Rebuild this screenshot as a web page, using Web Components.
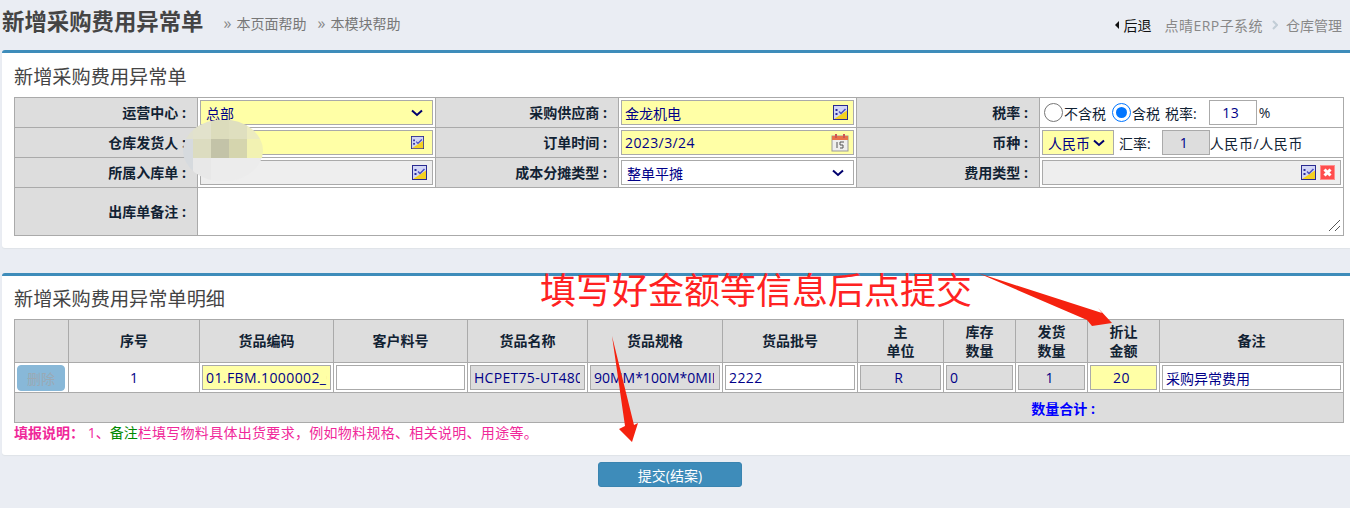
<!DOCTYPE html>
<html lang="zh">
<head>
<meta charset="utf-8">
<title>新增采购费用异常单</title>
<style>
    html, body { margin: 0; padding: 0; }
    body {
        width: 1350px;
        height: 508px;
        overflow: hidden;
        background: #eaedf3;
        font-family: "Open Sans", "Noto Sans CJK SC", sans-serif;
        font-size: 14px;
        color: #123;
        position: relative;
    }
</style>
</head>
<body>

<template id="page-header">
    <style>
        :host { display: flex; align-items: flex-start; height: 50px; box-sizing: border-box; padding: 5px 8px 0 2px; }
        h1 { margin: 0; font-size: 22.4px; line-height: 33px; font-weight: 700; color: #444; }
        .help { display: flex; gap: 11px; margin-left: 20px; padding-top: 6px; color: #777; font-size: 14px; line-height: 25px; }
        .help span::before { content: "»"; display: inline-block; width: 13px; font-size: 16px; color: #888; }
        .crumbs { margin-left: auto; display: flex; align-items: center; height: 25px; padding-top: 7px; font-size: 14px; color: #888; }
        .back { color: #111; margin-right: 13px; display: flex; align-items: center; gap: 5px; }
        .back i { width: 0; height: 0; border: 4px solid transparent; border-left: 0; border-right: 4px solid #111; }
        .sys { letter-spacing: .45px; }
        .sep { margin: 0 8px 0 9px; display: block; }
    </style>
    <h1><slot></slot></h1>
    <div class="help"><span>本页面帮助</span><span>本模块帮助</span></div>
    <div class="crumbs">
        <span class="back"><i></i>后退</span>
        <span class="sys">点晴ERP子系统</span>
        <svg class="sep" width="6" height="10" viewBox="0 0 6 10"><path d="M1 1l4 4-4 4" fill="none" stroke="#c2cdd6" stroke-width="2"/></svg>
        <span>仓库管理</span>
    </div>
</template>

<template id="page-panel">
    <style>
        :host { display: block; margin-left: 2px; background: #fff; border-top: 3px solid #3e8cba; border-radius: 3px 0 0 3px; box-sizing: border-box; padding: 0 6px 0 12px; box-shadow: 0 1px 1px #dfe3e8; }
        h2 { margin: 0; padding-top: 3px; font-weight: 400; font-size: 19.2px; color: #444; white-space: nowrap; }
    </style>
    <h2></h2>
    <slot></slot>
</template>

<template id="grid-table">
    <style>
        :host { display: grid; width: 1330px; box-sizing: border-box; border-top: 1px solid #aaa; border-left: 1px solid #aaa; }
    </style>
    <slot></slot>
</template>

<template id="grid-cell">
    <style>
        :host { display: flex; align-items: center; box-sizing: border-box; min-width: 0; background: #fff; border-right: 1px solid #aaa; border-bottom: 1px solid #aaa; padding: 0 2px; color: #123; white-space: nowrap; }
        :host([head]) { background: #ddd; font-weight: 700; justify-content: flex-end; padding: 0 11px 1px 0; }
        :host([th]) { background: #ddd; font-weight: 700; justify-content: center; text-align: center; line-height: 19px; padding: 0 0 1px; }
        :host([center]) { justify-content: center; color: #008; }
    </style>
    <slot></slot>
</template>

<template id="text-field">
    <style>
        :host { display: flex; align-items: center; flex: 1; min-width: 0; box-sizing: border-box; height: 25px; border: 1px solid #aaa; background: #fff; color: #008; font-size: 14px; padding: 0 3px; gap: 3px; overflow: hidden; white-space: nowrap; }
        :host([tone="yellow"]) { background: #ffffa6; }
        :host([tone="gray"]) { background: #eee; }
        :host([tone="dim"]) { background: #ddd; }
        :host([center]) { justify-content: center; }
        :host([wide]) { letter-spacing: .4px; }
        .v { flex: 1; min-width: 0; overflow: hidden; }
        :host([center]) .v { flex: none; }
        :host([select]) .v { margin-left: 2px; }
        .i { display: flex; align-items: center; gap: 4px; flex: none; margin-right: 1px; }
        :host([bare]) .i { display: none; }
    </style>
    <span class="v"><slot></slot></span>
    <span class="i"><slot name="icon"></slot></span>
</template>

<template id="select-arrow">
    <style>
        :host { display: block; margin-right: 5px; }
        svg { display: block; }
    </style>
    <svg width="12" height="8" viewBox="0 0 12 8"><path d="M1 1.5 6 6l5-4.5" fill="none" stroke="#00006e" stroke-width="2"/></svg>
</template>

<template id="pick-icon">
    <style>
        :host { display: block; }
        svg { display: block; }
    </style>
    <svg></svg>
</template>

<template id="action-button">
    <style>
        :host { display: flex; align-items: center; justify-content: center; box-sizing: border-box; background: #3e8cba; color: #fff; border-radius: 3px; border: 1px solid #3a84b0; font-size: 14px; }
        :host([disabled]) { background: #88b8d8; color: #9aa9b4; border-color: #88b8d8; border-radius: 4px; }
    </style>
    <slot></slot>
</template>

<page-header>新增采购费用异常单</page-header>

<page-panel heading="新增采购费用异常单" rowh="41" style="height:198px">
    <grid-table style="grid-template-columns:183px 238px 183px 238px 183px 304px;grid-template-rows:30px 30px 30px 48px" id="form"></grid-table>
</page-panel>

<page-panel heading="新增采购费用异常单明细" rowh="40" style="margin-top:25px;height:182px">
    <grid-table id="detail" style="grid-template-columns:54px 131px 134px 134px 120px 135px 135px 86px 72px 72px 72px 184px;grid-template-rows:43px 30px 30px"></grid-table>
    <div style="font-size:14px;line-height:20px;color:#f0289a;white-space:nowrap"><b>填报说明：</b>&nbsp;1、<span style="color:#080">备注</span><span style="letter-spacing:.3px">栏填写物料具体出货要求，例如物料规格、相关说明、用途等。</span></div>
</page-panel>

<div style="display:flex;justify-content:center;margin-top:7px;padding-right:10px">
    <action-button style="width:144px;height:25px">提交(结案)</action-button>
</div>

<script>
    const ICONS = {
        pick: [15, 15, '<rect x=".5" y=".5" width="14" height="14" fill="#d2d6f6" stroke="#2a2a90"/><path d="M1 14 14 5.5V14z" fill="#f4d020"/><rect x="2.5" y="4" width="2" height="2" fill="#2a2a9a"/><rect x="2.5" y="8" width="2" height="2" fill="#2a2a9a"/><path d="M6 6.5l2 2 4.5-4.5" fill="none" stroke="#4a4ac0" stroke-width="1.5"/>'],
        cal: [18, 18, '<rect x="1" y="2" width="16" height="15" fill="#eee" stroke="#999"/><rect x="1" y="2" width="16" height="4" fill="#e8734a"/><rect x="4" y="0" width="2" height="4" fill="#c55"/><rect x="12" y="0" width="2" height="4" fill="#c55"/><path d="M6 8v6M9 8h4M9 8v3h3v3H9" fill="none" stroke="#555"/>'],
        del: [15, 15, '<rect x=".5" y=".5" width="14" height="14" fill="#ff4d4d" stroke="#ff8f8f"/><path d="M4.5 4.5l6 6M10.5 4.5l-6 6" stroke="#fff" stroke-width="3"/>']
    };

    function simple(name, init) {
        customElements.define(name, class extends HTMLElement {
            constructor() {
                super();
                const root = this.attachShadow({ mode: "open" });
                root.appendChild(document.getElementById(name).content.cloneNode(true));
                if (init) init(this, root);
            }
        });
    }
    simple("page-header");
    simple("page-panel", (el, root) => {
        const h = root.querySelector("h2");
        h.textContent = el.getAttribute("heading");
        h.style.lineHeight = el.getAttribute("rowh") + "px";
    });
    simple("grid-table");
    simple("grid-cell");
    simple("text-field");
    simple("select-arrow");
    simple("action-button");
    simple("pick-icon", (el, root) => {
        const svg = root.querySelector("svg");
        const [w, h, body] = ICONS[el.getAttribute("kind") || "pick"];
        const size = el.getAttribute("size");
        svg.setAttribute("viewBox", `0 0 ${w} ${h}`);
        svg.setAttribute("width", size || w);
        svg.setAttribute("height", size || h);
        svg.innerHTML = body;
    });

    document.getElementById("form").innerHTML = `
        <grid-cell head>运营中心 :</grid-cell>
        <grid-cell><text-field tone="yellow" select>总部<select-arrow slot="icon"></select-arrow></text-field></grid-cell>
        <grid-cell head>采购供应商 :</grid-cell>
        <grid-cell><text-field tone="yellow">金龙机电<pick-icon slot="icon" style="margin-right:1px"></pick-icon></text-field></grid-cell>
        <grid-cell head>税率 :</grid-cell>
        <grid-cell style="padding-left:4px">
            <svg width="19" height="19" viewBox="0 0 19 19"><circle cx="9.5" cy="9.5" r="9" fill="#fff" stroke="#767676"/></svg>
            <span style="margin:0 6px 0 1px">不含税</span>
            <svg width="19" height="19" viewBox="0 0 19 19"><circle cx="9.5" cy="9.5" r="9" fill="#fff" stroke="#0075ff"/><circle cx="9.5" cy="9.5" r="5.5" fill="#0075ff"/></svg>
            <span style="margin:0 5px 0 1px">含税</span>
            <span style="margin-right:12px">税率:</span>
            <text-field center wide style="flex:none;width:48px">13</text-field>
            <span style="margin-left:2px">%</span>
        </grid-cell>

        <grid-cell head>仓库发货人 :</grid-cell>
        <grid-cell><text-field tone="yellow"><pick-icon slot="icon" size="13" style="margin-right:4px"></pick-icon></text-field></grid-cell>
        <grid-cell head>订单时间 :</grid-cell>
        <grid-cell><text-field tone="yellow" wide>2023/3/24<pick-icon slot="icon" kind="cal"></pick-icon></text-field></grid-cell>
        <grid-cell head>币种 :</grid-cell>
        <grid-cell>
            <text-field tone="yellow" select style="flex:none;width:72px">人民币<select-arrow slot="icon" style="margin-right:4px"></select-arrow></text-field>
            <span style="margin:0 11px 0 5px">汇率:</span>
            <text-field tone="dim" center style="flex:none;width:48px">1</text-field>
            <span style="letter-spacing:.6px">人民币/人民币</span>
        </grid-cell>

        <grid-cell head>所属入库单 :</grid-cell>
        <grid-cell><text-field tone="gray"><pick-icon slot="icon" style="margin-right:1px"></pick-icon></text-field></grid-cell>
        <grid-cell head>成本分摊类型 :</grid-cell>
        <grid-cell><text-field select>整单平摊<select-arrow slot="icon"></select-arrow></text-field></grid-cell>
        <grid-cell head>费用类型 :</grid-cell>
        <grid-cell><text-field tone="gray"><pick-icon slot="icon"></pick-icon><pick-icon slot="icon" kind="del" style="margin-right:1px"></pick-icon></text-field></grid-cell>

        <grid-cell head>出库单备注 :</grid-cell>
        <grid-cell style="grid-column:2 / -1;position:relative">
            <svg width="13" height="13" viewBox="0 0 13 13" style="position:absolute;right:2px;bottom:3px"><path d="M1 12 12 1M7 12l5-5" stroke="#555" fill="none"/></svg>
        </grid-cell>`;

    document.getElementById("detail").innerHTML = `
        <grid-cell th></grid-cell>
        <grid-cell th>序号</grid-cell>
        <grid-cell th>货品编码</grid-cell>
        <grid-cell th>客户料号</grid-cell>
        <grid-cell th>货品名称</grid-cell>
        <grid-cell th>货品规格</grid-cell>
        <grid-cell th>货品批号</grid-cell>
        <grid-cell th>主<br>单位</grid-cell>
        <grid-cell th>库存<br>数量</grid-cell>
        <grid-cell th>发货<br>数量</grid-cell>
        <grid-cell th>折让<br>金额</grid-cell>
        <grid-cell th>备注</grid-cell>

        <grid-cell><action-button disabled style="width:48px;height:26px">删除</action-button></grid-cell>
        <grid-cell center>1</grid-cell>
        <grid-cell><text-field tone="yellow" wide bare>01.FBM.1000002_001</text-field></grid-cell>
        <grid-cell><text-field></text-field></grid-cell>
        <grid-cell><text-field tone="dim" bare style="letter-spacing:.3px;padding-right:4px">HCPET75-UT480</text-field></grid-cell>
        <grid-cell><text-field tone="dim" bare style="padding-right:5px">90MM*100M*0MIL</text-field></grid-cell>
        <grid-cell><text-field wide>2222</text-field></grid-cell>
        <grid-cell><text-field tone="dim" center>R</text-field></grid-cell>
        <grid-cell><text-field tone="dim">0</text-field></grid-cell>
        <grid-cell><text-field tone="dim" center>1</text-field></grid-cell>
        <grid-cell><text-field tone="yellow" center wide>20</text-field></grid-cell>
        <grid-cell><text-field>采购异常费用</text-field></grid-cell>

        <grid-cell style="grid-column:1 / -1;background:#ddd;justify-content:flex-end;font-weight:700;color:#00f;padding-right:248px">数量合计 :</grid-cell>`;
</script>

<!-- blurred patch and hand-drawn annotation lie over the page -->
<svg width="1350" height="508" viewBox="0 0 1350 508" style="position:absolute;left:0;top:0;pointer-events:none">
    <defs><clipPath id="blur"><ellipse cx="223" cy="150.5" rx="40" ry="31"/></clipPath></defs>
    <g clip-path="url(#blur)">
        <rect x="183" y="120" width="10" height="19" fill="#e0e0d0"/>
        <rect x="193" y="120" width="18" height="19" fill="#e2e2cc"/><rect x="211" y="120" width="18" height="19" fill="#dcdcbc"/><rect x="229" y="120" width="18" height="19" fill="#dfdfbf"/><rect x="247" y="120" width="16" height="19" fill="#ecebc0"/>
        <rect x="183" y="139" width="10" height="42" fill="#d6dade"/>
        <rect x="193" y="139" width="18" height="19" fill="#dcdcc0"/><rect x="211" y="139" width="18" height="19" fill="#c3c3a8"/><rect x="229" y="139" width="18" height="19" fill="#d5d5ae"/><rect x="247" y="139" width="16" height="19" fill="#f2f2b2"/>
        <rect x="193" y="158" width="18" height="23" fill="#e8e8e8"/><rect x="211" y="158" width="52" height="23" fill="#ececec"/>
    </g>
    <path d="M612 336 625 426 619 429 632 442 638 423 634 425Z" fill="#f5220f"/>
    <path d="M978 273 1102 313 1098 308 1112 323 1092 326 1087 320Z" fill="#f5220f"/>
    <text x="540" y="304" font-size="36" fill="#ff2222" font-family="'Noto Sans CJK SC', sans-serif">填写好金额等信息后点提交</text>
</svg>
</body>
</html>
